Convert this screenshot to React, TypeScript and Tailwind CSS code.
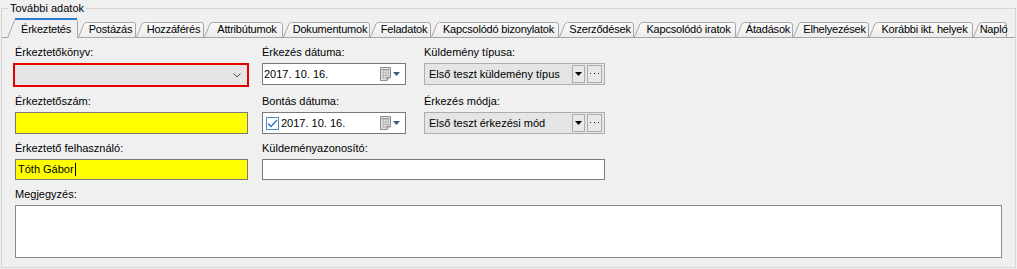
import React from "react";

const TABS: [string, number][] = [
  ["Érkeztetés", 71],
  ["Postázás", 58],
  ["Hozzáférés", 68],
  ["Attribútumok", 79],
  ["Dokumentumok", 87],
  ["Feladatok", 61],
  ["Kapcsolódó bizonylatok", 128],
  ["Szerződések", 75],
  ["Kapcsolódó iratok", 102],
  ["Átadások", 57],
  ["Elhelyezések", 76],
  ["Korábbi ikt. helyek", 104],
  ["Napló", 34],
];

const Tab: React.FC<{ label: string; w: number; active?: boolean }> = ({ label, w, active }) => {
  const h = active ? 20 : 15;
  const d = active
    ? `M0.5,${h} L7.5,2.5 Q8,1 9.5,1 L${w - 3},1 Q${w - 0.5},1 ${w - 0.5},3.5 L${w - 0.5},${h}`
    : `M0.5,${h} L6,2 Q6.8,0.5 8.5,0.5 L${w - 3},0.5 Q${w - 0.5},0.5 ${w - 0.5},3 L${w - 0.5},${h}`;
  return (
    <div
      className={`relative shrink-0 flex items-center justify-center pl-[7px] ${
        active ? "h-[20px] -mb-px z-10" : "h-[15px]"
      }`}
      style={{ width: w }}
    >
      <svg className="absolute left-0 top-0" width={w} height={h}>
        <defs>
          <linearGradient id="tabg" x1="0" y1="0" x2="0" y2="1">
            <stop offset="0" stopColor="#fbfbfb" />
            <stop offset="1" stopColor="#ececec" />
          </linearGradient>
        </defs>
        <path d={d} fill={active ? "#f0f0f0" : "url(#tabg)"} stroke="#a7a7a7" strokeWidth="1" />
        {active && <rect x="8" y="0" width={w - 9} height="2" fill="#2b7cd3" />}
      </svg>
      <span className={`relative whitespace-nowrap leading-[13px] tracking-[-0.2px] ${active ? "mt-[2px]" : ""}`}>
        {label}
      </span>
    </div>
  );
};

const Label: React.FC<{ children: React.ReactNode }> = ({ children }) => (
  <div className="h-[13px] leading-[13px] mb-[4px] whitespace-nowrap">{children}</div>
);

const CalendarIcon = () => (
  <svg width="11" height="14" viewBox="0 0 11 14">
    <path d="M0.5,0.5 H10.5 V10 L7,13.5 H0.5 Z" fill="#e4e4e4" stroke="#8c8c8c" />
    <path d="M1.5,2 H9.5 V3.5 H1.5 Z" fill="#9a9a9a" />
    <path d="M3.5,3.5 V12 M6,3.5 V12 M8.5,3.5 V10 M1.5,6 H9.5 M1.5,8.5 H9.5 M1.5,11 H7" stroke="#b9b9b9" strokeWidth="1" />
    <path d="M7,13.5 V10.5 H10.5" fill="#cfcfcf" stroke="#8c8c8c" />
  </svg>
);

const DownArrow: React.FC<{ color?: string }> = ({ color = "#3e5877" }) => (
  <svg width="8" height="4" viewBox="0 0 8 4">
    <path d="M0,0 H7 L3.5,4 Z" fill={color} />
  </svg>
);

const DateBox: React.FC<{ value: string; check?: boolean }> = ({ value, check }) => (
  <div className="w-[144px] h-[22px] border border-[#7a7a7a] bg-white flex items-center pl-[1px] pr-[4px]">
    {check && (
      <div className="w-[13px] h-[13px] border border-[#4e8ad0] bg-white flex items-center justify-center ml-[2px] mr-[2px]">
        <svg width="11" height="9" viewBox="0 0 11 9">
          <path d="M1,4.5 L4,7.5 L10,1" fill="none" stroke="#2f74c5" strokeWidth="1.3" />
        </svg>
      </div>
    )}
    <span className="whitespace-nowrap">{value}</span>
    <div className="ml-auto flex items-center gap-[2px]">
      <CalendarIcon />
      <DownArrow />
    </div>
  </div>
);

const ComboBox: React.FC<{ value: string }> = ({ value }) => (
  <div className="h-[22px] border border-[#adadad] bg-[#e5e5e5] flex items-center pl-[4px] pr-[2px]">
    <span className="whitespace-nowrap">{value}</span>
    <div className="ml-auto flex items-center gap-[2px]">
      <div className="w-[13px] h-[18px] border border-[#adadad] bg-[#e8e8e8] flex items-center justify-center">
        <DownArrow color="#000" />
      </div>
      <div className="w-[15px] h-[18px] border border-[#adadad] bg-[#e8e8e8] flex items-center justify-center">
        <svg width="9" height="2" viewBox="0 0 9 2">
          <rect x="0" y="0" width="1" height="1" fill="#222" />
          <rect x="4" y="0" width="1" height="1" fill="#222" />
          <rect x="8" y="0" width="1" height="1" fill="#222" />
        </svg>
      </div>
    </div>
  </div>
);

export default function App() {
  return (
    <div className="w-[1017px] h-[269px] bg-[#f0f0f0] pt-[2px] px-[1px] text-[11px] text-black font-['Liberation_Sans',Arial,sans-serif] overflow-hidden">
      <fieldset className="w-[1015px] h-[266px] border border-[#d5d5d5] m-0 p-0 min-w-0">
        <legend className="ml-[6px] px-[2px] leading-[13px]">További adatok</legend>

        {/* Tabs */}
        <div className="mt-[3px] h-[20px] border-b border-[#a7a7a7] flex items-end pl-[5px]">
          {TABS.map(([label, w], i) => (
            <Tab key={label} label={label} w={w} active={i === 0} />
          ))}
        </div>

        {/* Page */}
        <div className="pt-[8px] pl-[13px] pr-[11px]">
          <div className="grid grid-cols-[247px_162px_181px] gap-y-[8px]">
            <div>
              <Label>Érkeztetőkönyv:</Label>
              <div className="-ml-[2px] w-[236px] h-[24px] border-2 border-[#e60000] bg-[#e5e5e5] flex items-center justify-end pr-[6px]">
                <svg width="8" height="5" viewBox="0 0 8 5">
                  <path d="M0.5,0.5 L4,4 L7.5,0.5" fill="none" stroke="#4a4a4a" strokeWidth="1" />
                </svg>
              </div>
            </div>
            <div>
              <Label>Érkezés dátuma:</Label>
              <DateBox value="2017. 10. 16." />
            </div>
            <div>
              <Label>Küldemény típusa:</Label>
              <ComboBox value="Első teszt küldemény típus" />
            </div>

            <div>
              <Label>Érkeztetőszám:</Label>
              <div className="w-[233px] h-[22px] border border-[#7a7a7a] bg-[#ffff00]" />
            </div>
            <div>
              <Label>Bontás dátuma:</Label>
              <DateBox value="2017. 10. 16." check />
            </div>
            <div>
              <Label>Érkezés módja:</Label>
              <ComboBox value="Első teszt érkezési mód" />
            </div>

            <div>
              <Label>Érkeztető felhasználó:</Label>
              <div className="w-[233px] h-[21px] border border-[#7a7a7a] bg-[#ffff00] flex items-center pl-[2px]">
                <span>Tóth Gábor</span>
                <span className="w-px h-[13px] bg-black ml-[1px]" />
              </div>
            </div>
            <div className="col-span-2">
              <Label>Küldeményazonosító:</Label>
              <div className="h-[21px] border border-[#7a7a7a] bg-white" />
            </div>
          </div>

          <div className="mt-[8px]">
            <Label>Megjegyzés:</Label>
            <div className="w-[987px] h-[53px] border border-[#8a8a8a] bg-white" />
          </div>
        </div>
      </fieldset>
    </div>
  );
}
